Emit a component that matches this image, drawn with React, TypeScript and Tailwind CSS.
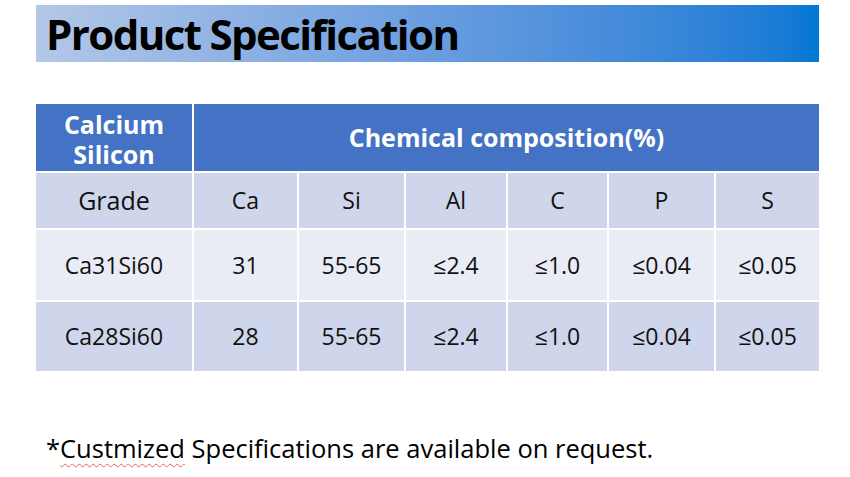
import React from "react";

const cols = ["Ca", "Si", "Al", "C", "P", "S"];
const rows = [
  ["Ca31Si60", "31", "55-65", "≤2.4", "≤1.0", "≤0.04", "≤0.05"],
  ["Ca28Si60", "28", "55-65", "≤2.4", "≤1.0", "≤0.04", "≤0.05"],
];

export default function App() {
  return (
    <div
      className="w-[850px] h-[477px] bg-white relative overflow-hidden"
      style={{ fontFamily: '"Open Sans", "Noto Sans", sans-serif' }}
    >
      <div className="pt-[5px] pl-[36px]">
        <div className="w-[783px] h-[57px] bg-gradient-to-r from-[#b4c7e7] via-[#6a9ddf] to-[#0078d4] flex items-center pl-[10px]">
          <span className="text-[42px] font-bold text-black leading-none tracking-[-1.6px] inline-block whitespace-nowrap">
            Product Specification
          </span>
        </div>
      </div>

      <div className="ml-[36px] mt-[42px] w-[783px] grid grid-cols-[156px_103px_105px_100px_99px_105px_103px] grid-rows-[67px_55px_70px_69px] gap-x-[2px] gap-y-[2px] text-[#111]">
        <div className="bg-[#4472c4] text-white font-bold text-[25px] flex flex-col items-center justify-center text-center pt-[3px]">
          <span className="block leading-[30px]">Calcium</span>
          <span className="block leading-[30px]">Silicon</span>
        </div>
        <div className="col-span-6 bg-[#4472c4] text-white font-bold text-[25px] flex items-center justify-center">
          Chemical composition(%)
        </div>
        <div className="bg-[#cfd5ea] text-[25px] flex items-center justify-center">Grade</div>
        {cols.map((c) => (
          <div key={c} className="bg-[#cfd5ea] text-[23px] flex items-center justify-center">
            {c}
          </div>
        ))}
        {rows.map((r, i) =>
          r.map((v, j) => (
            <div
              key={i + "-" + j}
              className={
                (i === 0 ? "bg-[#e9ebf5]" : "bg-[#cfd5ea]") +
                " text-[23px] flex items-center justify-center"
              }
            >
              {v}
            </div>
          ))
        )}
      </div>

      <div className="ml-[46px] mt-[65px] text-[25.5px] text-black leading-none whitespace-nowrap">
        *
        <span className="underline decoration-wavy decoration-[#e06060] decoration-[1px] underline-offset-[5px]">
          Custmized
        </span>{" "}
        Specifications are available on request.
      </div>
    </div>
  );
}
